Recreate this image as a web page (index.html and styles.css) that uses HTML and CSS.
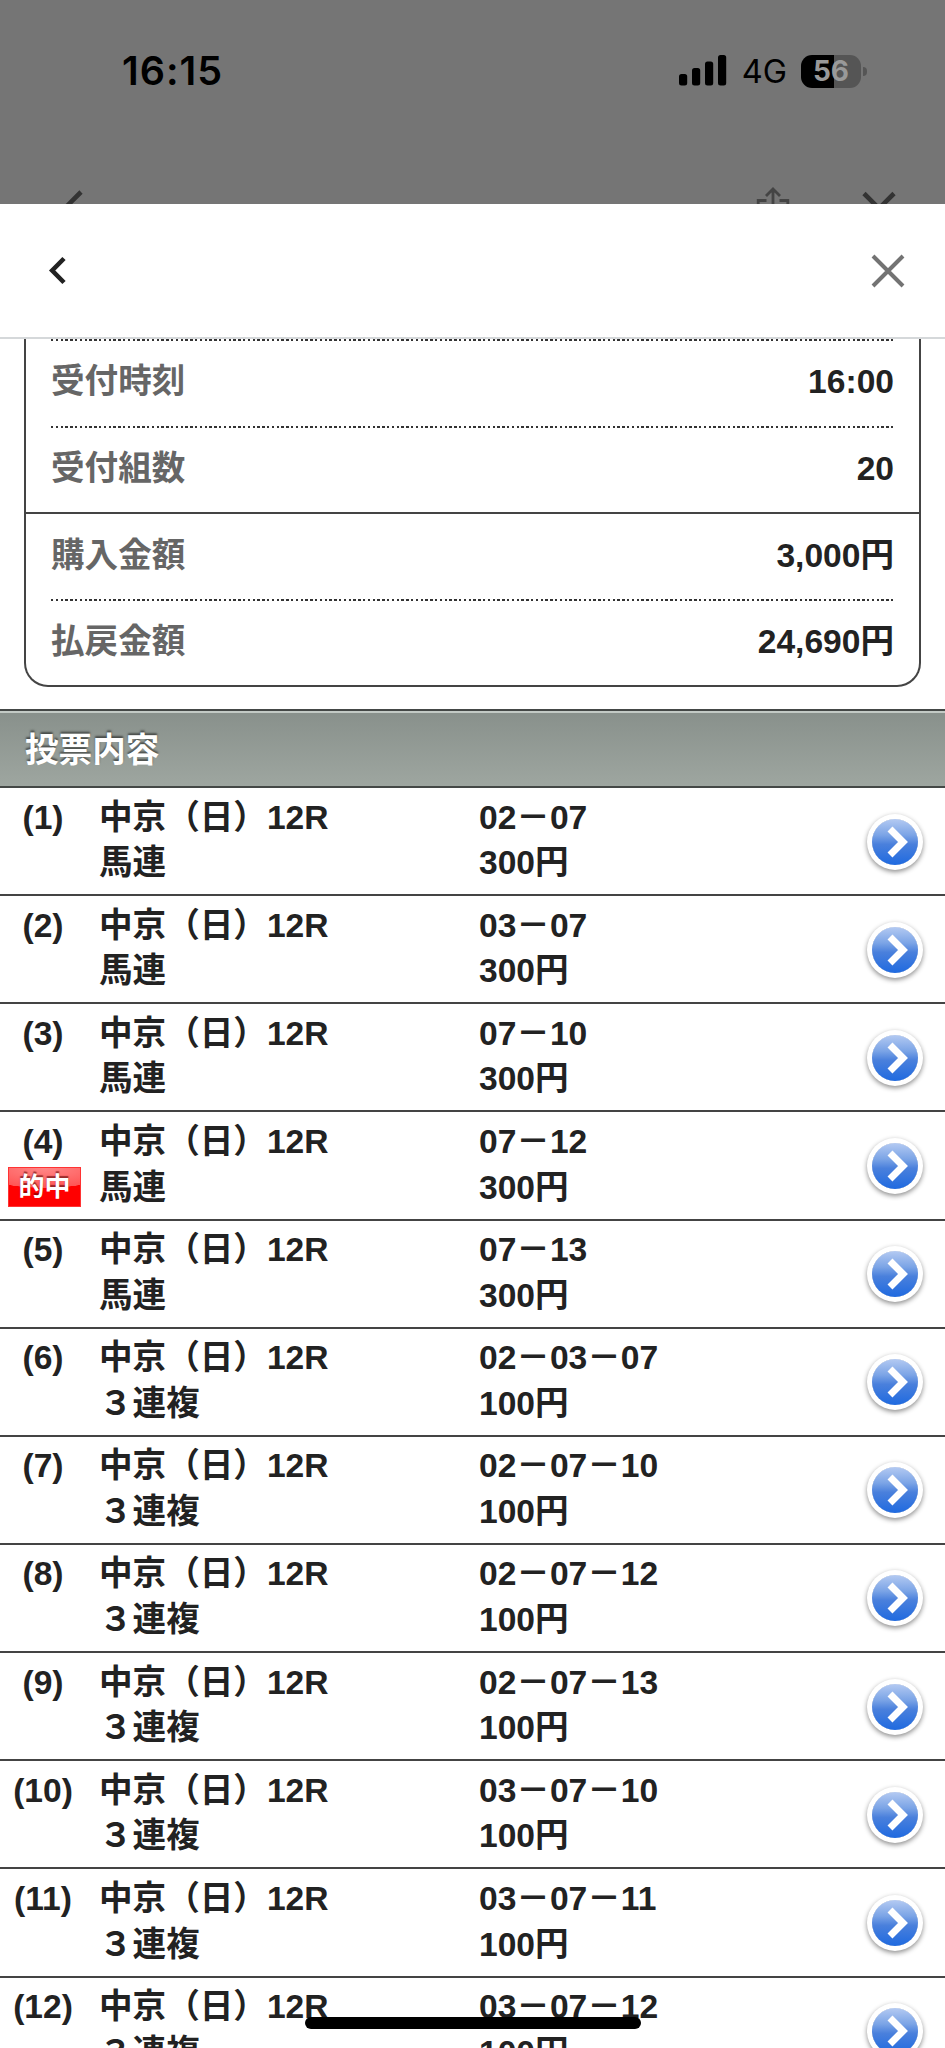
FILE: index.html
```html
<!DOCTYPE html>
<html lang="ja">
<head>
  <meta charset="UTF-8">
  <title>投票内容</title>
  <link rel="stylesheet" href="styles.css">
</head>
<body>

  <svg width="0" height="0" class="defs">
    <symbol id="arrow" viewBox="0 0 46 46">
      <polyline points="18,10 31,23 18,36" fill="none" stroke="#fff" stroke-width="7"/>
    </symbol>
  </svg>

  <div class="backdrop">
    <div class="status">
      <span class="time">16:15</span>
      <div class="status-right">
        <svg class="signal" width="48" height="31" viewBox="0 0 48 31">
          <rect x="0" y="19" width="8.2" height="11.5" rx="2.5"/>
          <rect x="13" y="13" width="8.2" height="17.5" rx="2.5"/>
          <rect x="26" y="6.5" width="8.2" height="24" rx="2.5"/>
          <rect x="39" y="0" width="8.2" height="30.5" rx="2.5"/>
        </svg>
        <span class="network">4G</span>
        <div class="battery"><span>56</span></div>
      </div>
    </div>
    <div class="behind">
      <svg class="behind-back" width="30" height="30" viewBox="0 0 30 30">
        <polyline points="27,4 8,23 27,42" fill="none" stroke="#333" stroke-width="4.6"/>
      </svg>
      <div class="behind-right">
        <svg width="34" height="30" viewBox="0 0 34 30" fill="none" stroke="#444" stroke-width="2.8">
          <path d="M17 30V5M10 12L17 5L24 12M10.500 16.500H2.200V30M23.500 16.500H31.800V30"/>
        </svg>
        <svg width="34" height="30" viewBox="0 0 34 30">
          <path d="M2 9.500L17 24.500L32 9.500" fill="none" stroke="#333" stroke-width="4.6"/>
        </svg>
      </div>
    </div>
  </div>

  <div class="sheet-header">
    <svg width="20" height="34" viewBox="0 0 20 34">
      <polyline points="16,4.500 4.200,16.500 16,28.500" fill="none" stroke="#222" stroke-width="4.6"/>
    </svg>
    <svg width="34" height="34" viewBox="0 0 34 34">
      <path d="M2 2L32 32M32 2L2 32" stroke="#737373" stroke-width="4"/>
    </svg>
  </div>

  <div class="summary">
    <div class="item"><span class="label">受付時刻</span><span>16:00</span></div>
    <div class="item last"><span class="label">受付組数</span><span>20</span></div>
    <div class="item"><span class="label">購入金額</span><span>3,000円</span></div>
    <div class="item"><span class="label">払戻金額</span><span>24,690円</span></div>
  </div>

  <h2 class="section">投票内容</h2>

  <ul class="bets">
    <li>
      <div class="no">(1)</div>
      <div class="race">中京（日）12R<br>馬連</div>
      <div class="pick">02－07<br>300円</div>
      <svg class="go"><use href="#arrow"/></svg>
    </li>
    <li>
      <div class="no">(2)</div>
      <div class="race">中京（日）12R<br>馬連</div>
      <div class="pick">03－07<br>300円</div>
      <svg class="go"><use href="#arrow"/></svg>
    </li>
    <li>
      <div class="no">(3)</div>
      <div class="race">中京（日）12R<br>馬連</div>
      <div class="pick">07－10<br>300円</div>
      <svg class="go"><use href="#arrow"/></svg>
    </li>
    <li>
      <div class="no">(4)<span class="hit">的中</span></div>
      <div class="race">中京（日）12R<br>馬連</div>
      <div class="pick">07－12<br>300円</div>
      <svg class="go"><use href="#arrow"/></svg>
    </li>
    <li>
      <div class="no">(5)</div>
      <div class="race">中京（日）12R<br>馬連</div>
      <div class="pick">07－13<br>300円</div>
      <svg class="go"><use href="#arrow"/></svg>
    </li>
    <li>
      <div class="no">(6)</div>
      <div class="race">中京（日）12R<br>３連複</div>
      <div class="pick">02－03－07<br>100円</div>
      <svg class="go"><use href="#arrow"/></svg>
    </li>
    <li>
      <div class="no">(7)</div>
      <div class="race">中京（日）12R<br>３連複</div>
      <div class="pick">02－07－10<br>100円</div>
      <svg class="go"><use href="#arrow"/></svg>
    </li>
    <li>
      <div class="no">(8)</div>
      <div class="race">中京（日）12R<br>３連複</div>
      <div class="pick">02－07－12<br>100円</div>
      <svg class="go"><use href="#arrow"/></svg>
    </li>
    <li>
      <div class="no">(9)</div>
      <div class="race">中京（日）12R<br>３連複</div>
      <div class="pick">02－07－13<br>100円</div>
      <svg class="go"><use href="#arrow"/></svg>
    </li>
    <li>
      <div class="no">(10)</div>
      <div class="race">中京（日）12R<br>３連複</div>
      <div class="pick">03－07－10<br>100円</div>
      <svg class="go"><use href="#arrow"/></svg>
    </li>
    <li>
      <div class="no">(11)</div>
      <div class="race">中京（日）12R<br>３連複</div>
      <div class="pick">03－07－11<br>100円</div>
      <svg class="go"><use href="#arrow"/></svg>
    </li>
    <li>
      <div class="no">(12)</div>
      <div class="race">中京（日）12R<br>３連複</div>
      <div class="pick">03－07－12<br>100円</div>
      <svg class="go"><use href="#arrow"/></svg>
    </li>
  </ul>

  <div class="home-bar"></div>

</body>
</html>
```
FILE: styles.css
```css
* {
  box-sizing: border-box;
}

body {
  margin: 0;
  height: 2048px;
  overflow: hidden;
  position: relative;
  background: #fff;
  color: #222;
  font-family: "Liberation Sans", "Noto Sans CJK JP", sans-serif;
  font-size: 33.6px;
  font-weight: bold;
}

svg {
  display: block;
  flex-shrink: 0;
}

.defs {
  position: absolute;
}

/* dimmed page behind the sheet */
.backdrop {
  height: 204px;
  background: #757575;
  overflow: hidden;
  display: flex;
  flex-direction: column;
  justify-content: space-between;
}

.status {
  display: flex;
  justify-content: space-between;
  padding: 46px 84px 0 122px;
  color: #000;
  font-family: Inter, sans-serif;
}

.time {
  font-size: 39.5px;
  font-weight: 600;
  letter-spacing: 1px;
  line-height: 50px;
}

.status-right {
  display: flex;
  align-items: center;
  height: 50px;
}

.signal {
  margin-top: -1px;
}

.network {
  margin: 1px 14px 0 15px;
  font-size: 32.5px;
  font-weight: 400;
}

.battery {
  position: relative;
  width: 60px;
  height: 33px;
  border-radius: 11px;
  background: linear-gradient(90deg, #000 33px, #555 33px);
  color: #999;
  font-size: 28px;
  font-weight: 700;
  line-height: 33px;
  text-align: center;
}

.battery::after {
  content: "";
  position: absolute;
  left: 62px;
  top: 12px;
  width: 4px;
  height: 9px;
  border-radius: 0 5px 5px 0;
  background: #555;
}

.behind {
  height: 20px;
  display: flex;
  justify-content: space-between;
  padding: 0 49px 0 54px;
}

.behind-back {
  margin-top: 4px;
}

.behind-right {
  display: flex;
  gap: 72px;
}

.sheet-header {
  height: 135px;
  display: flex;
  justify-content: space-between;
  align-items: center;
  padding: 0 40px 0 48px;
  border-bottom: 2px solid #d5d8da;
}

.summary {
  margin: 0 24px 22px;
  border: 2px solid #444;
  border-top: none;
  border-radius: 0 0 24px 24px;
}

.item {
  height: 86.5px;
  display: flex;
  justify-content: space-between;
  padding: 0 25px;
  line-height: 86px;
  background: repeating-linear-gradient(90deg, #333 0 2.4px, #fff 2.4px 4.8px) 25px 0 / 845px 2px no-repeat;
}

.item.last + .item {
  border-top: 2px solid #444;
  background: none;
  line-height: 83px;
}

.label {
  color: #666;
}

.section {
  margin: 0;
  height: 79px;
  padding-left: 25px;
  border-top: 2px solid #444846;
  border-bottom: 2px solid #444846;
  box-shadow: inset 0 2px #c3cac5;
  background: linear-gradient(#88908b, #9ea6a0);
  color: #fff;
  font-size: 33.6px;
  line-height: 79px;
  text-shadow: 0 -2px 2px rgba(0, 0, 0, 0.5);
}

.bets {
  margin: 0;
  padding: 0;
  list-style: none;
}

.bets li {
  height: 108.15px;
  display: flex;
  padding-top: 6.5px;
  border-bottom: 2px solid #444;
  line-height: 45.7px;
}

.no {
  width: 86px;
  text-align: center;
}

.race {
  width: 380px;
  margin-left: 13px;
}

.pick {
  flex: 1;
}

.go {
  width: 46px;
  height: 46px;
  margin: 24px 27px 0 0;
  border-radius: 50%;
  background: linear-gradient(#b4caf2 0%, #7ba4e6 35%, #4a80dc 55%, #1f6ae0 100%);
  box-shadow: 0 0 0 5px #fff, 0 2px 5px 5px rgba(0, 0, 0, 0.45);
}

.hit {
  display: block;
  width: 73px;
  height: 40px;
  margin: 2px 0 0 8px;
  border: 1px solid #f33;
  background: radial-gradient(ellipse 70px 20px at 50% 0, #f88 0, #f55 98%, #f00 100%);
  color: #fff;
  font-size: 26px;
  line-height: 38px;
  text-shadow: 0 -2px 1px rgba(90, 0, 0, 0.6);
}

.home-bar {
  position: absolute;
  left: 305px;
  top: 2017px;
  width: 336px;
  height: 12px;
  border-radius: 6px;
  background: #000;
}
```
